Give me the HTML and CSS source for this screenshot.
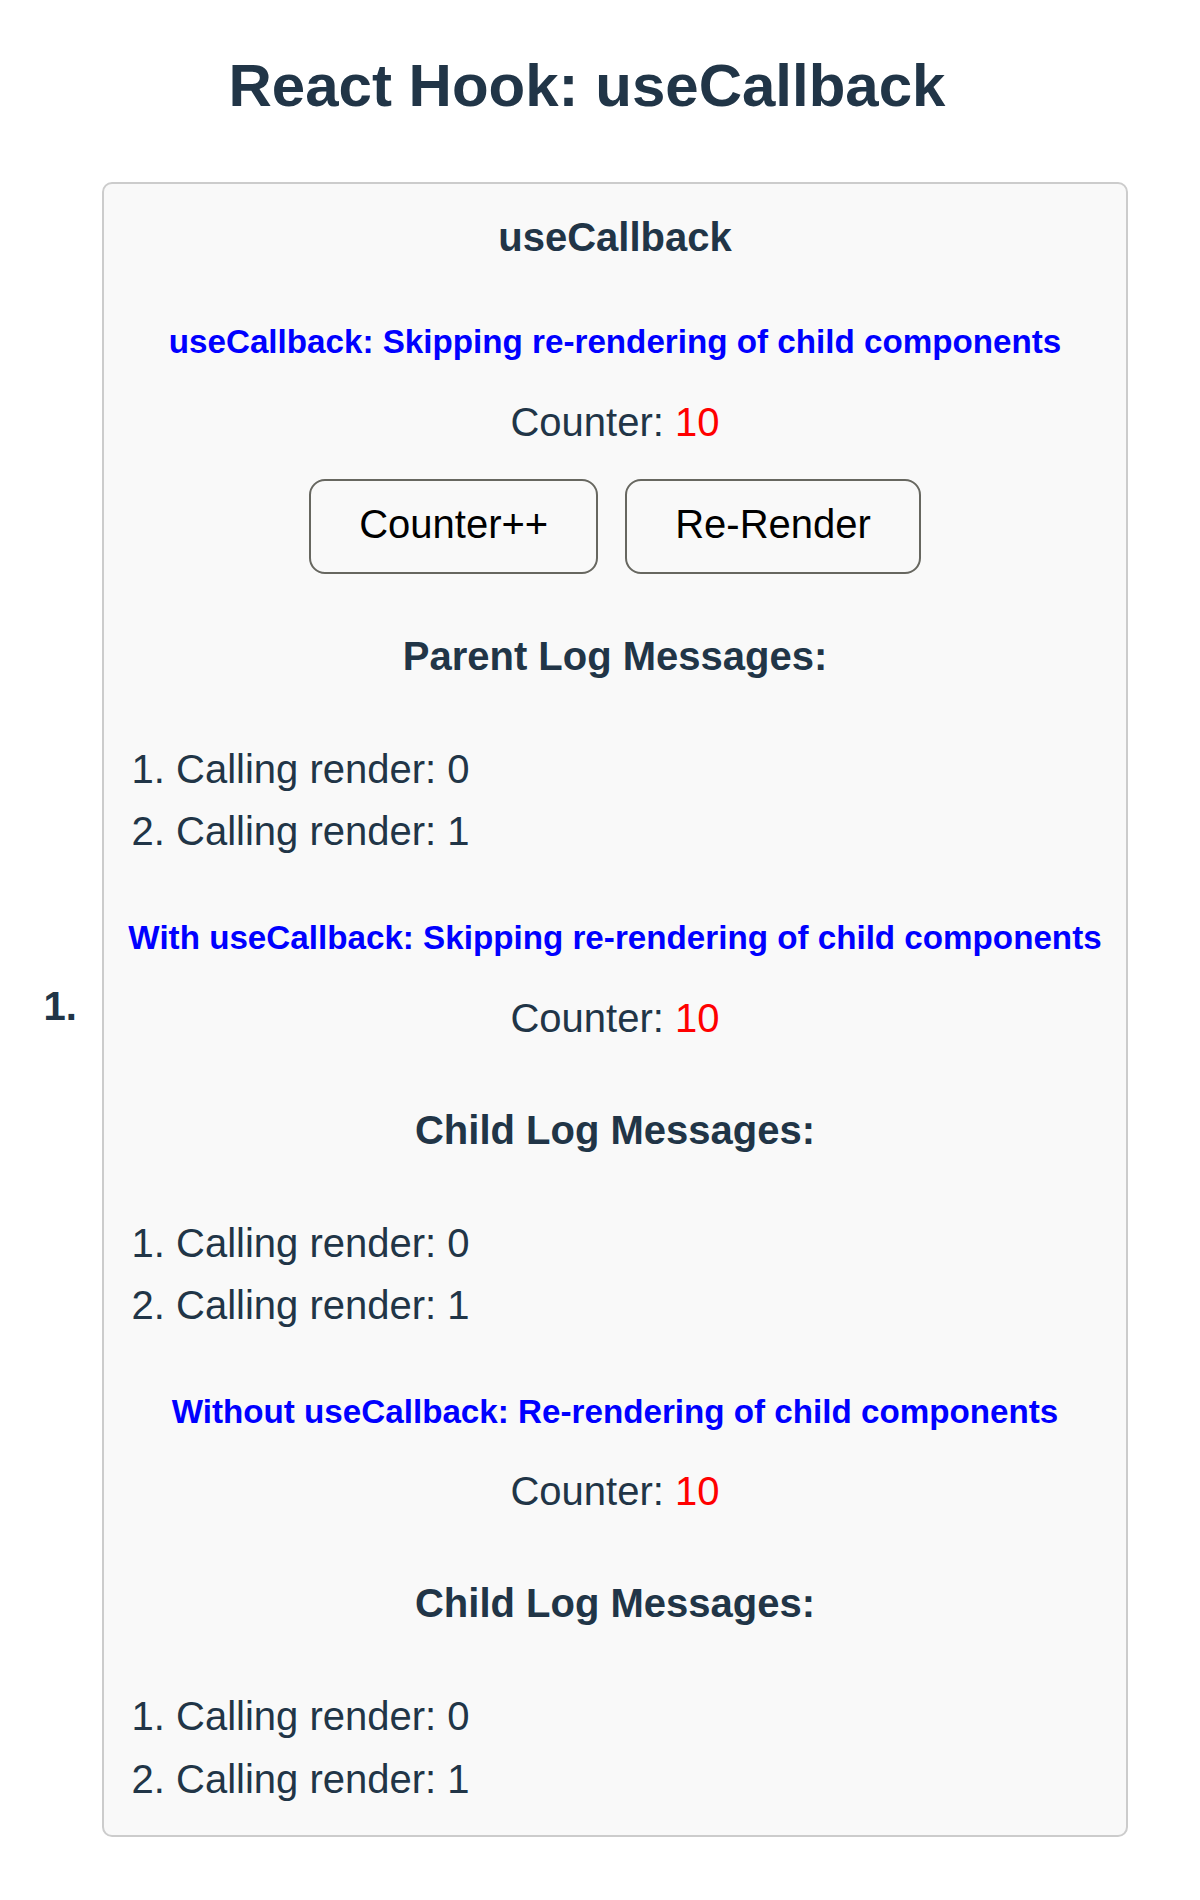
FILE: index.html
```html
<!DOCTYPE html>
<html lang="en">
<head>
<meta charset="utf-8">
<title>React Hook: useCallback</title>
<link rel="stylesheet" href="styles.css">
</head>
<body>
<div class="app">
  <h1 class="page-title">React Hook: useCallback</h1>
  <ol class="demos">
    <li class="demo"><div class="card">
      <h4 class="card-title">useCallback</h4>
      <h5 class="note">useCallback: Skipping re-rendering of child components</h5>
      <p class="counter">Counter: <span class="count">10</span></p>
      <div class="actions">
        <button class="btn" type="button">Counter++</button>
        <button class="btn" type="button">Re-Render</button>
      </div>
      <h4 class="log-title">Parent Log Messages:</h4>
      <ol class="log">
        <li>Calling render: 0</li>
        <li>Calling render: 1</li>
      </ol>
      <h5 class="note">With useCallback: Skipping re-rendering of child components</h5>
      <p class="counter">Counter: <span class="count">10</span></p>
      <h4 class="log-title">Child Log Messages:</h4>
      <ol class="log">
        <li>Calling render: 0</li>
        <li>Calling render: 1</li>
      </ol>
      <h5 class="note">Without useCallback: Re-rendering of child components</h5>
      <p class="counter">Counter: <span class="count">10</span></p>
      <h4 class="log-title">Child Log Messages:</h4>
      <ol class="log">
        <li>Calling render: 0</li>
        <li>Calling render: 1</li>
      </ol>
    </div></li>
  </ol>
</div>
</body>
</html>
```

FILE: styles.css
```css
html {
  background: #ffffff;
}

body {
  margin: 0;
  font-family: "Liberation Sans", Arial, Helvetica, sans-serif;
  font-size: 40px;
  line-height: 1.5;
  color: #213547;
  background: #ffffff;
}

.app {
  width: 1158px;
  margin-left: 8px;
  text-align: center;
}

.page-title {
  font-size: 60px;
  font-weight: 700;
  line-height: 1.5;
  margin: 41px 0 51px;
}

.demos {
  margin: 0;
  padding-left: 80px;
  text-align: left;
}

.demo {
  font-weight: 700;
  font-size: 40px;
  line-height: 1.5;
}

.card {
  display: inline-block;
  vertical-align: middle;
  box-sizing: border-box;
  width: 1026px;
  margin-left: 14px;
  padding: 23px 20px 25px;
  border: 2px solid #cccccc;
  border-radius: 10px;
  background: #f9f9f9;
  text-align: center;
  font-weight: 400;
}

.card-title {
  font-size: 40px;
  font-weight: 700;
  line-height: 60px;
  margin: 0;
}

.note {
  font-size: 33.2px;
  font-weight: 700;
  line-height: 49.8px;
  color: #0000ff;
  margin: 50px 0 25px;
}

.counter {
  font-size: 40px;
  line-height: 60px;
  margin: 25px 0;
}

.count {
  color: #ff0000;
}

.actions {
  display: flex;
  justify-content: center;
  gap: 27px;
  margin: 27px 0 52px;
}

.btn {
  font-family: inherit;
  font-size: 40px;
  line-height: 46px;
  padding: 20px 48px 25px;
  border: 2px solid #676760;
  border-radius: 16px;
  background: #f9f9f9;
  color: #000000;
  cursor: pointer;
}

.log-title {
  font-size: 40px;
  font-weight: 700;
  line-height: 60px;
  margin: 52px 0;
}

.log {
  margin: 52px 0 0;
  padding-left: 52px;
  text-align: left;
}

.log li {
  font-size: 40px;
  line-height: 62.5px;
}
```
